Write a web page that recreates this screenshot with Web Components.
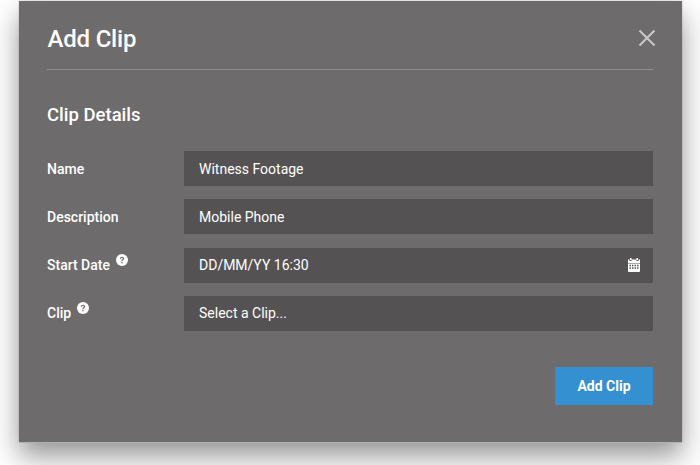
<!DOCTYPE html>
<html>
<head>
<meta charset="utf-8">
<style>
    html, body {
        background: #fff;
        height: 465px;
        margin: 0;
        overflow: hidden;
    }

    body {
        box-sizing: border-box;
        font-family: Roboto, sans-serif;
        padding: 1px 18px 0 19px;
    }
</style>
</head>
<body>
<add-clip-dialog heading="Add Clip">
    <form-section heading="Clip Details">
        <form-row label="Name" value="Witness Footage"></form-row>
        <form-row label="Description" value="Mobile Phone"></form-row>
        <form-row label="Start Date" value="DD/MM/YY 16:30" help>
            <svg slot="icon" width="12" height="14" viewBox="0 0 12 14" fill="#fff">
                <path d="M2 0h1.500v2H2zM8.500 0H10v2H8.500zM0 1.500h1.500V3h2V1.500h5V3h2V1.500H12V5H0z"/>
                <path fill-rule="evenodd" d="M0 5.500h12V13a1 1 0 0 1-1 1H1a1 1 0 0 1-1-1zM1.500 6.800v1.500H3V6.800zM4 6.800v1.500h1.500V6.800zM6.500 6.800v1.500H8V6.800zM9 6.800v1.500h1.500V6.800zM1.500 9.300v1.500H3V9.300zM4 9.300v1.500h1.500V9.300zM6.500 9.300v1.500H8V9.300zM9 9.300v1.500h1.500V9.300z"/>
            </svg>
        </form-row>
        <form-row label="Clip" value="Select a Clip..." help></form-row>
    </form-section>
    <action-button slot="footer">Add Clip</action-button>
</add-clip-dialog>

<script>
(function() {
    class AddClipDialog extends HTMLElement {
        constructor() {
            super();

            this.attachShadow({ mode: "open" });
            this.shadowRoot.innerHTML = `
            <style>
            :host {
                background-color: #6e6b6c;
                box-shadow: 0 1px 0 #b4b3b3, 0 14px 26px rgba(0, 0, 0, 0.42), 0 0 2px rgba(0, 0, 0, 0.2);
                box-sizing: border-box;
                color: #fff;
                display: flex;
                flex-direction: column;
                height: 441px;
                padding: 0 29px 0 28px;
                width: 663px;
            }

            /* Header */
            .header {
                align-items: center;
                border-bottom: 1px solid #8f8d8e;
                display: flex;
                height: 68px;
                justify-content: space-between;
            }

            h1 {
                font-size: 24px;
                font-weight: 500;
                letter-spacing: -0.2px;
                margin: 8px 0 0 0.5px;
            }

            .close {
                display: block;
                margin: 6px -3px 0 0;
            }

            /* Footer */
            .footer {
                display: flex;
                justify-content: flex-end;
                margin-top: 36px;
            }
            </style>
            <div class="header">
                <h1></h1>
                <svg class="close" width="18" height="18" viewBox="0 0 18 18" stroke="#c9c8c8" stroke-width="2" fill="none">
                    <path d="M1.500 1.500l15 15M16.500 1.500l-15 15"/>
                </svg>
            </div>
            <slot></slot>
            <div class="footer"><slot name="footer"></slot></div>
            `;
        }

        connectedCallback() {
            this.shadowRoot.querySelector("h1").textContent = this.getAttribute("heading");
        }
    }

    class FormSection extends HTMLElement {
        constructor() {
            super();

            this.attachShadow({ mode: "open" });
            this.shadowRoot.innerHTML = `
            <style>
            :host {
                display: block;
            }

            h2 {
                font-size: 18.5px;
                font-weight: 500;
                line-height: 22px;
                margin: 34px 0 25px;
            }

            .rows {
                display: flex;
                flex-direction: column;
                gap: 13.33px;
            }
            </style>
            <h2></h2>
            <div class="rows"><slot></slot></div>
            `;
        }

        connectedCallback() {
            this.shadowRoot.querySelector("h2").textContent = this.getAttribute("heading");
        }
    }

    class FormRow extends HTMLElement {
        constructor() {
            super();

            this.attachShadow({ mode: "open" });
            this.shadowRoot.innerHTML = `
            <style>
            :host {
                align-items: center;
                display: grid;
                grid-template-columns: 137px 1fr;
            }

            .label {
                align-items: flex-start;
                display: flex;
                font-size: 14px;
                font-weight: 500;
                gap: 6px;
            }

            .help {
                display: none;
                margin-top: -3px;
            }

            :host([help]) .help {
                display: block;
            }

            .field {
                align-items: center;
                background-color: #555253;
                display: flex;
                font-size: 14px;
                height: 35px;
                justify-content: space-between;
                padding: 0 13px 0 15px;
            }

            ::slotted(svg) {
                display: block;
            }
            </style>
            <div class="label">
                <span class="text"></span>
                <svg class="help" width="12" height="12" viewBox="0 0 12 12">
                    <circle cx="6" cy="6" r="6" fill="#fff"/>
                    <path d="M3.900 4.700C3.900 3.500 4.800 2.700 6 2.700s2.100.8 2.100 1.900c0 1.500-1.600 1.500-1.600 2.700H5.300c0-1.800 1.500-1.800 1.500-2.700 0-.4-.3-.8-.8-.8s-.9.400-.9.900z" fill="#6e6b6c"/>
                    <rect x="5.300" y="8" width="1.300" height="1.300" fill="#6e6b6c"/>
                </svg>
            </div>
            <div class="field">
                <span class="value"></span>
                <slot name="icon"></slot>
            </div>
            `;
        }

        connectedCallback() {
            this.shadowRoot.querySelector(".text").textContent = this.getAttribute("label");
            this.shadowRoot.querySelector(".value").textContent = this.getAttribute("value");
        }
    }

    class ActionButton extends HTMLElement {
        constructor() {
            super();

            this.attachShadow({ mode: "open" });
            this.shadowRoot.innerHTML = `
            <style>
            :host {
                align-items: center;
                background-color: #3490d0;
                color: #fff;
                display: flex;
                font-size: 14px;
                font-weight: 700;
                height: 38px;
                justify-content: center;
                width: 98px;
            }
            </style>
            <slot></slot>
            `;
        }
    }

    customElements.define("add-clip-dialog", AddClipDialog);
    customElements.define("form-section", FormSection);
    customElements.define("form-row", FormRow);
    customElements.define("action-button", ActionButton);
})();
</script>
</body>
</html>
